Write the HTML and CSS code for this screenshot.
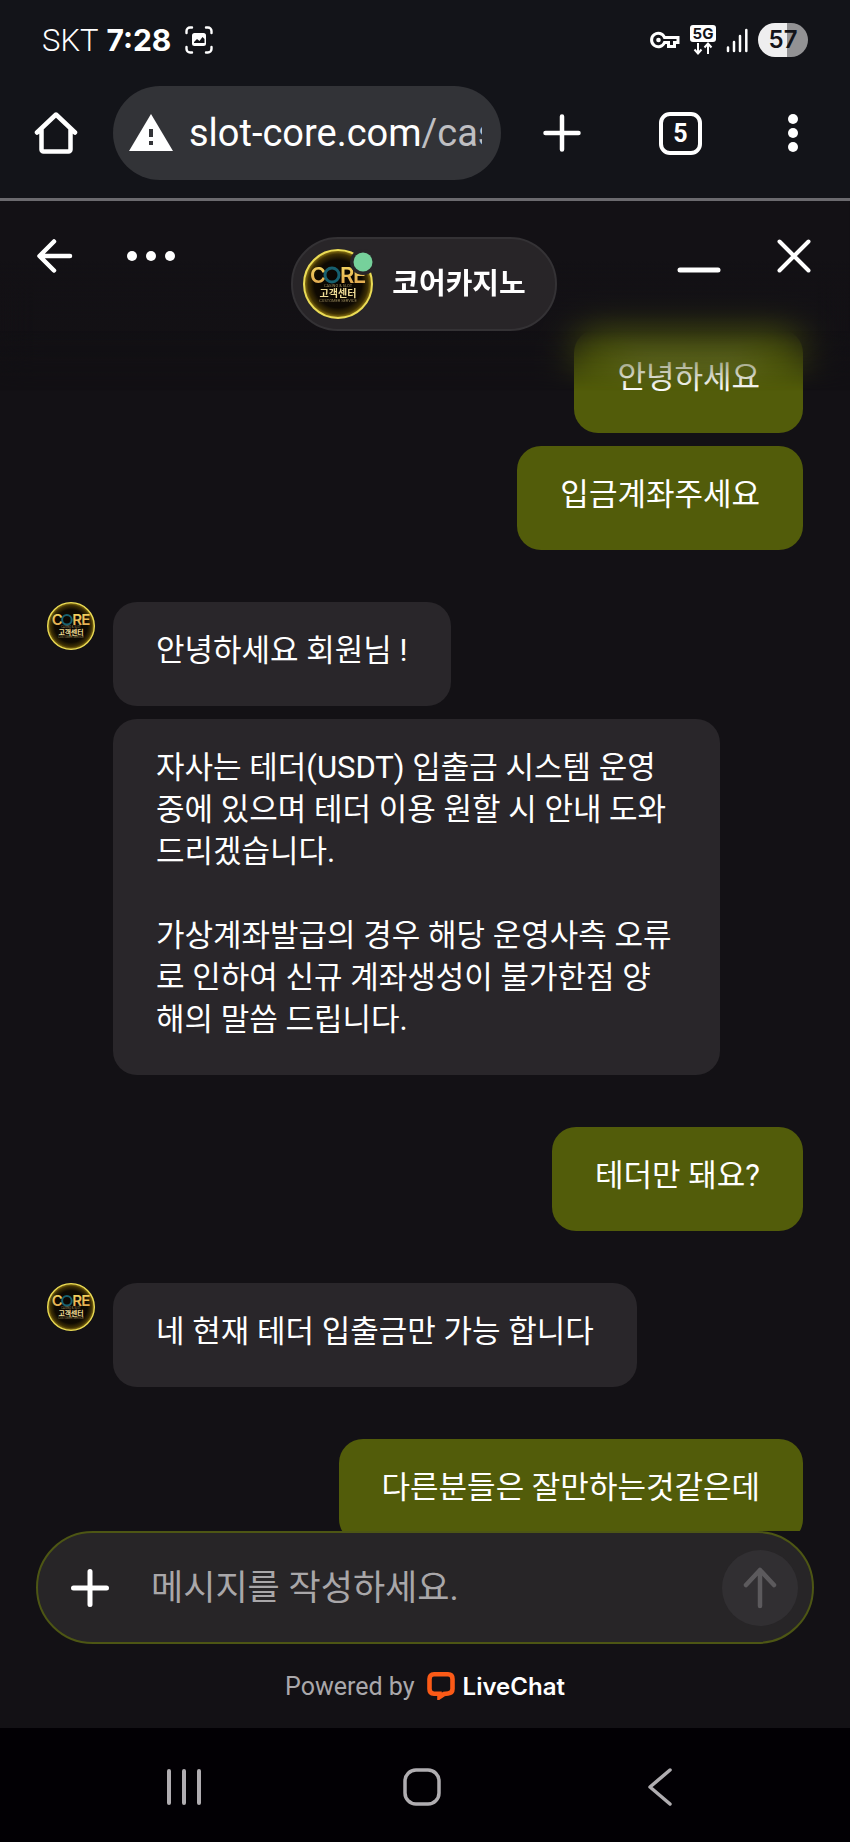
FILE: index.html
```html
<!DOCTYPE html>
<html lang="ko">
<head>
<meta charset="utf-8">
<meta name="viewport" content="width=device-width, initial-scale=1">
<title>코어카지노</title>
<link rel="stylesheet" href="styles.css">
</head>
<body>
<svg class="defs" width="0" height="0" aria-hidden="true">
  <defs>
    <radialGradient id="glow">
      <stop offset="0" stop-color="#080502"/>
      <stop offset="0.7" stop-color="#0f0a02"/>
      <stop offset="0.88" stop-color="#3d2f04"/>
      <stop offset="1" stop-color="#9a8116"/>
    </radialGradient>
    <linearGradient id="gold" x1="0" y1="0" x2="0" y2="1">
      <stop offset="0" stop-color="#f6dc62"/>
      <stop offset="1" stop-color="#dfa14e"/>
    </linearGradient>
    <symbol id="logo" viewBox="0 0 70 70">
      <circle cx="35" cy="35" r="34" fill="url(#glow)" stroke="#eadb55" stroke-width="2"/>
      <text x="7" y="34" class="logo-word" fill="url(#gold)">C</text>
      <circle cx="29" cy="26" r="7" fill="none" stroke="#17606f" stroke-width="3"/>
      <text x="37" y="34" class="logo-word" fill="url(#gold)">R</text>
      <text x="50" y="34" class="logo-word" fill="url(#gold)">E</text>
      <text x="35" y="38" class="logo-tiny" text-anchor="middle">CASINO &amp; SLOT</text>
      <text x="35" y="48" class="logo-ko" text-anchor="middle">고객센터</text>
      <text x="35" y="53" class="logo-tiny" text-anchor="middle">CUSTOMER SERVICE</text>
    </symbol>
  </defs>
</svg>

<div class="phone">
  <div class="status">
    <span class="carrier">SKT</span>
    <span class="clock">7:28</span>
    <svg class="capture" width="28" height="28" viewBox="0 0 28 28" fill="none" stroke="#fff" stroke-width="2.4" stroke-linecap="round">
      <path d="M1.500 7V5A3.500 3.500 0 0 1 5 1.500H7M21 1.500h2A3.500 3.500 0 0 1 26.500 5v2M26.500 21v2a3.500 3.500 0 0 1-3.500 3.500h-2M7 26.500H5A3.500 3.500 0 0 1 1.500 23v-2"/>
      <rect x="7" y="7" width="14" height="13" rx="2.500" fill="#fff" stroke="none"/>
      <path d="M9 16l3-3 2.500 2 3-4 2 2v4H9z" fill="#131419" stroke="none"/>
    </svg>
    <div class="status-right">
      <svg width="30" height="18" viewBox="0 0 30 18" fill="none" stroke="#fff" stroke-width="3">
        <path d="M14.500 6.500A6.700 6.700 0 1 0 14.500 11.500H18.500V15.500H24.500V11.500H28V6.500Z" stroke-linejoin="miter"/>
        <circle cx="8.500" cy="9" r="2.300" fill="#fff" stroke="none"/>
      </svg>
      <svg width="26" height="31" viewBox="0 0 26 31">
        <rect width="26" height="17" rx="3" fill="#fff"/>
        <text x="13" y="14" class="net" text-anchor="middle">5G</text>
        <path d="M8 18v10M4.500 24.500L8 28.500l3.500-4M18 29V19M14.500 22.500l3.500-4 3.500 4" fill="none" stroke="#fff" stroke-width="2"/>
      </svg>
      <svg width="22" height="25" viewBox="0 0 22 25" stroke="#fff" stroke-width="2.500" stroke-linecap="round">
        <path d="M2 19.500V23M8 14V23M14 8V23M20.300 2V23"/>
      </svg>
      <span class="battery">57</span>
    </div>
  </div>

  <div class="toolbar">
    <button class="icon-btn" aria-label="홈">
      <svg width="44" height="44" viewBox="0 0 44 44" fill="none" stroke="#fff" stroke-width="4.500" stroke-linecap="round" stroke-linejoin="round">
        <path d="M3 21.500L22 3.500L41 21.500M7.500 18V38.500a2 2 0 0 0 2 2H34.500a2 2 0 0 0 2-2V18"/>
      </svg>
    </button>
    <a class="url" href="#">
      <svg class="warn" width="44" height="38" viewBox="0 0 44 38"><path d="M22 0L44 37H0Z" fill="#fff"/><path d="M22 15v8M22 27v4" stroke="#323337" stroke-width="4"/></svg>
      <span class="address">slot-core.com<span class="path">/cas</span></span>
    </a>
    <button class="icon-btn new-tab" aria-label="새 탭">
      <svg width="38" height="38" viewBox="0 0 38 38" stroke="#fff" stroke-width="4.500" stroke-linecap="round"><path d="M19 2.500v33M2.500 19h33"/></svg>
    </button>
    <button class="tabs" aria-label="탭 5개">5</button>
    <button class="icon-btn" aria-label="메뉴">
      <svg width="10" height="38" viewBox="0 0 10 38" fill="#fff"><circle cx="5" cy="5" r="5"/><circle cx="5" cy="19" r="5"/><circle cx="5" cy="33" r="5"/></svg>
    </button>
  </div>

  <main class="chat">
    <div class="veil"></div>
    <header class="chat-head">
      <div class="head-side">
        <button class="icon-btn" aria-label="뒤로">
          <svg width="36" height="34" viewBox="0 0 36 34" fill="none" stroke="#fff" stroke-width="4.500" stroke-linecap="round" stroke-linejoin="round"><path d="M17 2.500L2.500 17L17 31.500M3 17H33"/></svg>
        </button>
        <button class="icon-btn" aria-label="더보기">
          <svg width="48" height="34" viewBox="0 0 48 34" fill="#fff"><circle cx="5" cy="17" r="5"/><circle cx="24" cy="17" r="5"/><circle cx="43" cy="17" r="5"/></svg>
        </button>
      </div>
      <div class="agent">
        <svg width="70" height="70" viewBox="0 0 70 70" role="img" aria-label="CORE 고객센터">
          <use href="#logo" width="70" height="70"/>
          <circle cx="60" cy="13" r="13" fill="#282528"/>
          <circle cx="60" cy="13" r="9.500" fill="#76d19b"/>
        </svg>
        <h1 class="agent-name">코어카지노</h1>
      </div>
      <div class="head-side head-right">
        <button class="icon-btn" aria-label="최소화">
          <svg width="44" height="34" viewBox="0 0 44 34" stroke="#fff" stroke-width="5" stroke-linecap="round"><path d="M3 31h38"/></svg>
        </button>
        <button class="icon-btn" aria-label="닫기">
          <svg width="34" height="34" viewBox="0 0 34 34" stroke="#fff" stroke-width="4" stroke-linecap="round"><path d="M2.500 2.500l29 29M31.500 2.500l-29 29"/></svg>
        </button>
      </div>
    </header>

    <div class="messages">
      <div class="group mine">
        <p class="bubble">안녕하세요</p>
        <p class="bubble">입금계좌주세요</p>
      </div>
      <div class="group theirs">
        <svg class="avatar" width="48" height="48" role="img" aria-label="CORE 고객센터"><use href="#logo" width="48" height="48"/></svg>
        <div class="stack">
          <p class="bubble">안녕하세요 회원님 !</p>
          <p class="bubble">자사는 테더(USDT) 입출금 시스템 운영중에 있으며 테더 이용 원할 시 안내 도와드리겠습니다.<br><br>가상계좌발급의 경우 해당 운영사측 오류로 인하여 신규 계좌생성이 불가한점 양해의 말씀 드립니다.</p>
        </div>
      </div>
      <div class="group mine">
        <p class="bubble">테더만 돼요?</p>
      </div>
      <div class="group theirs">
        <svg class="avatar" width="48" height="48" role="img" aria-label="CORE 고객센터"><use href="#logo" width="48" height="48"/></svg>
        <div class="stack">
          <p class="bubble">네 현재 테더 입출금만 가능 합니다</p>
        </div>
      </div>
      <div class="group mine">
        <p class="bubble">다른분들은 잘만하는것같은데</p>
      </div>
    </div>

    <form class="composer">
      <button class="icon-btn" type="button" aria-label="첨부">
        <svg width="38" height="38" viewBox="0 0 38 38" stroke="#fff" stroke-width="5" stroke-linecap="round"><path d="M19 2.500v33M2.500 19h33"/></svg>
      </button>
      <input class="field" type="text" placeholder="메시지를 작성하세요." aria-label="메시지를 작성하세요.">
      <button class="send" type="button" aria-label="보내기">
        <svg width="34" height="42" viewBox="0 0 34 42" fill="none" stroke="#5c5a5d" stroke-width="4.500" stroke-linecap="round" stroke-linejoin="round"><path d="M17 39V3M3 18L17 3L31 18"/></svg>
      </button>
    </form>

    <footer class="powered">
      <span>Powered by</span>
      <a class="brand" href="#">
        <svg width="28" height="28" viewBox="0 0 28 28"><path d="M7 2.300H21Q25.500 2.300 25.500 7V17Q25.500 21 21 21.500L17 22L12.500 25V21.700H7Q2.500 21.500 2.500 17V7Q2.500 2.300 7 2.300Z" fill="none" stroke="#fb5a17" stroke-width="4.600"/></svg>
        <span>LiveChat</span>
      </a>
    </footer>
  </main>

  <nav class="sysnav">
    <button class="icon-btn" aria-label="최근 앱">
      <svg width="36" height="38" viewBox="0 0 36 38" stroke="#b0adb1" stroke-width="4" stroke-linecap="round"><path d="M3 3v32M18 3v32M33 3v32"/></svg>
    </button>
    <button class="icon-btn" aria-label="홈 화면">
      <svg width="38" height="38" viewBox="0 0 38 38" fill="none" stroke="#b0adb1" stroke-width="3.500"><rect x="2" y="2" width="34" height="34" rx="11"/></svg>
    </button>
    <button class="icon-btn" aria-label="이전">
      <svg width="24" height="38" viewBox="0 0 24 38" fill="none" stroke="#b0adb1" stroke-width="3.500" stroke-linecap="round" stroke-linejoin="round"><path d="M22 2L2 19L22 36"/></svg>
    </button>
  </nav>
</div>
</body>
</html>
```
FILE: styles.css
```css
* { box-sizing: border-box; }

body {
  margin: 0;
  background: #131115;
  color: #fff;
  font-family: Roboto, "Noto Sans CJK KR", sans-serif;
}

.defs { position: absolute; }

.logo-word { font: 600 22px Inter, sans-serif; }
.logo-ko { font: 700 10px "Noto Sans CJK KR", sans-serif; fill: #efdc96; }
.logo-tiny { font: 400 4px Roboto, sans-serif; fill: #9a8a5c; }

.phone {
  display: flex;
  flex-direction: column;
  height: 100vh;
}

.icon-btn {
  display: flex;
  padding: 0;
  border: 0;
  background: none;
}

/* System status bar */
.status {
  display: flex;
  align-items: center;
  height: 80px;
  padding: 0 42px;
  background: #131419;
}

.carrier { font-size: 31px; font-weight: 300; }
.clock { margin-left: 8px; font-family: Inter, sans-serif; font-size: 30px; font-weight: 700; }
.capture { margin-left: 14px; }

.status-right {
  display: flex;
  align-items: center;
  gap: 10px;
  margin-left: auto;
}

.net { font: 700 15px Inter, sans-serif; fill: #131419; }

.battery {
  width: 50px;
  border-radius: 17px;
  background: linear-gradient(90deg, #eeeeef 58%, #929294 58%);
  color: #131419;
  font-family: Inter, sans-serif;
  font-size: 24px;
  font-weight: 600;
  line-height: 34px;
  text-align: center;
}

/* Browser toolbar */
.toolbar {
  display: flex;
  align-items: center;
  height: 121px;
  padding: 0 52px 12px 34px;
  border-bottom: 3px solid #6b6a6e;
  background: #131419;
}

.url {
  display: flex;
  flex: 1;
  align-items: center;
  gap: 16px;
  min-width: 0;
  height: 94px;
  margin: 0 42px 0 35px;
  padding: 0 19px 0 16px;
  border-radius: 47px;
  background: #323337;
  color: #fff;
  text-decoration: none;
}

.warn { flex: none; }

.address {
  flex: 1;
  min-width: 0;
  overflow: hidden;
  font-size: 38px;
  white-space: nowrap;
}

.path { color: #bfbfc2; }

.tabs {
  width: 43px;
  height: 43px;
  margin: 0 86px 0 78px;
  padding: 0;
  border: 4px solid #fff;
  border-radius: 11px;
  background: none;
  color: #fff;
  font: 700 25px/35px Roboto, sans-serif;
}

/* Chat window */
.chat {
  display: flex;
  position: relative;
  flex: 1;
  flex-direction: column;
  min-height: 0;
}

.veil {
  position: absolute;
  z-index: 1;
  top: 0;
  right: 0;
  left: 0;
  height: 200px;
  background: linear-gradient(#131115 60px, rgba(19, 17, 21, 0.2) 120px, rgba(19, 17, 21, 0.2) 200px);
  backdrop-filter: blur(18px);
  -webkit-mask-image: linear-gradient(#000 130px, transparent 190px);
  mask-image: linear-gradient(#000 130px, transparent 190px);
  pointer-events: none;
}

.chat-head {
  display: grid;
  position: absolute;
  z-index: 2;
  top: 36px;
  right: 0;
  left: 0;
  grid-template-columns: 1fr auto 1fr;
  padding: 0 39px 0 37px;
}

.head-side {
  display: flex;
  align-items: flex-start;
  gap: 54px;
  padding-top: 2px;
}

.head-right { justify-content: flex-end; gap: 56px; }

.agent {
  display: flex;
  align-items: center;
  gap: 19px;
  height: 94px;
  padding: 0 29px 0 10px;
  border: 2px solid #343235;
  border-radius: 47px;
  background: #282528;
}

.agent-name {
  margin: 0;
  font-size: 29px;
  font-weight: 700;
  line-height: 42px;
}

.messages {
  display: flex;
  flex: 1;
  flex-direction: column;
  gap: 52px;
  min-height: 0;
  padding: 128px 47px 0;
  overflow-y: auto;
  scrollbar-width: none;
}

.group { display: flex; flex: none; }
.mine { flex-direction: column; align-items: flex-end; gap: 13px; }
.theirs { align-items: flex-start; gap: 18px; }
.avatar { flex: none; }

.stack {
  display: flex;
  flex: 1;
  flex-direction: column;
  align-items: flex-start;
  gap: 13px;
}

.bubble {
  max-width: 88%;
  margin: 0;
  padding: 28px 43px 34px;
  border-radius: 24px;
  background: #29262a;
  font-size: 31px;
  line-height: 42px;
}

.mine .bubble { background: #525c0a; }

.composer {
  display: flex;
  flex: none;
  align-items: center;
  height: 113px;
  margin: 0 36px;
  padding: 0 14px 0 33px;
  border: 2px solid #4d5614;
  border-radius: 57px;
  background: #272527;
}

.field {
  flex: 1;
  min-width: 0;
  margin-left: 42px;
  padding: 2px 0 0;
  border: 0;
  outline: 0;
  background: none;
  color: #fff;
  font: 400 35px/50px Roboto, "Noto Sans CJK KR", sans-serif;
}

.field::placeholder { color: #a9a7a9; opacity: 1; }

.send {
  display: flex;
  align-items: center;
  justify-content: center;
  width: 76px;
  height: 76px;
  padding: 0;
  border: 0;
  border-radius: 50%;
  background: #312f32;
}

.powered {
  display: flex;
  flex: none;
  align-items: center;
  justify-content: center;
  gap: 12px;
  height: 84px;
  color: #aaa8ab;
  font-size: 25px;
}

.brand {
  display: flex;
  align-items: center;
  gap: 8px;
  color: #fff;
  font-family: Inter, sans-serif;
  font-size: 24px;
  font-weight: 600;
  text-decoration: none;
}

/* System navigation */
.sysnav {
  display: grid;
  flex: none;
  grid-template-columns: repeat(3, 1fr);
  align-items: center;
  justify-items: center;
  height: 114px;
  padding: 4px 71px 0 65px;
  background: #020004;
}
```
